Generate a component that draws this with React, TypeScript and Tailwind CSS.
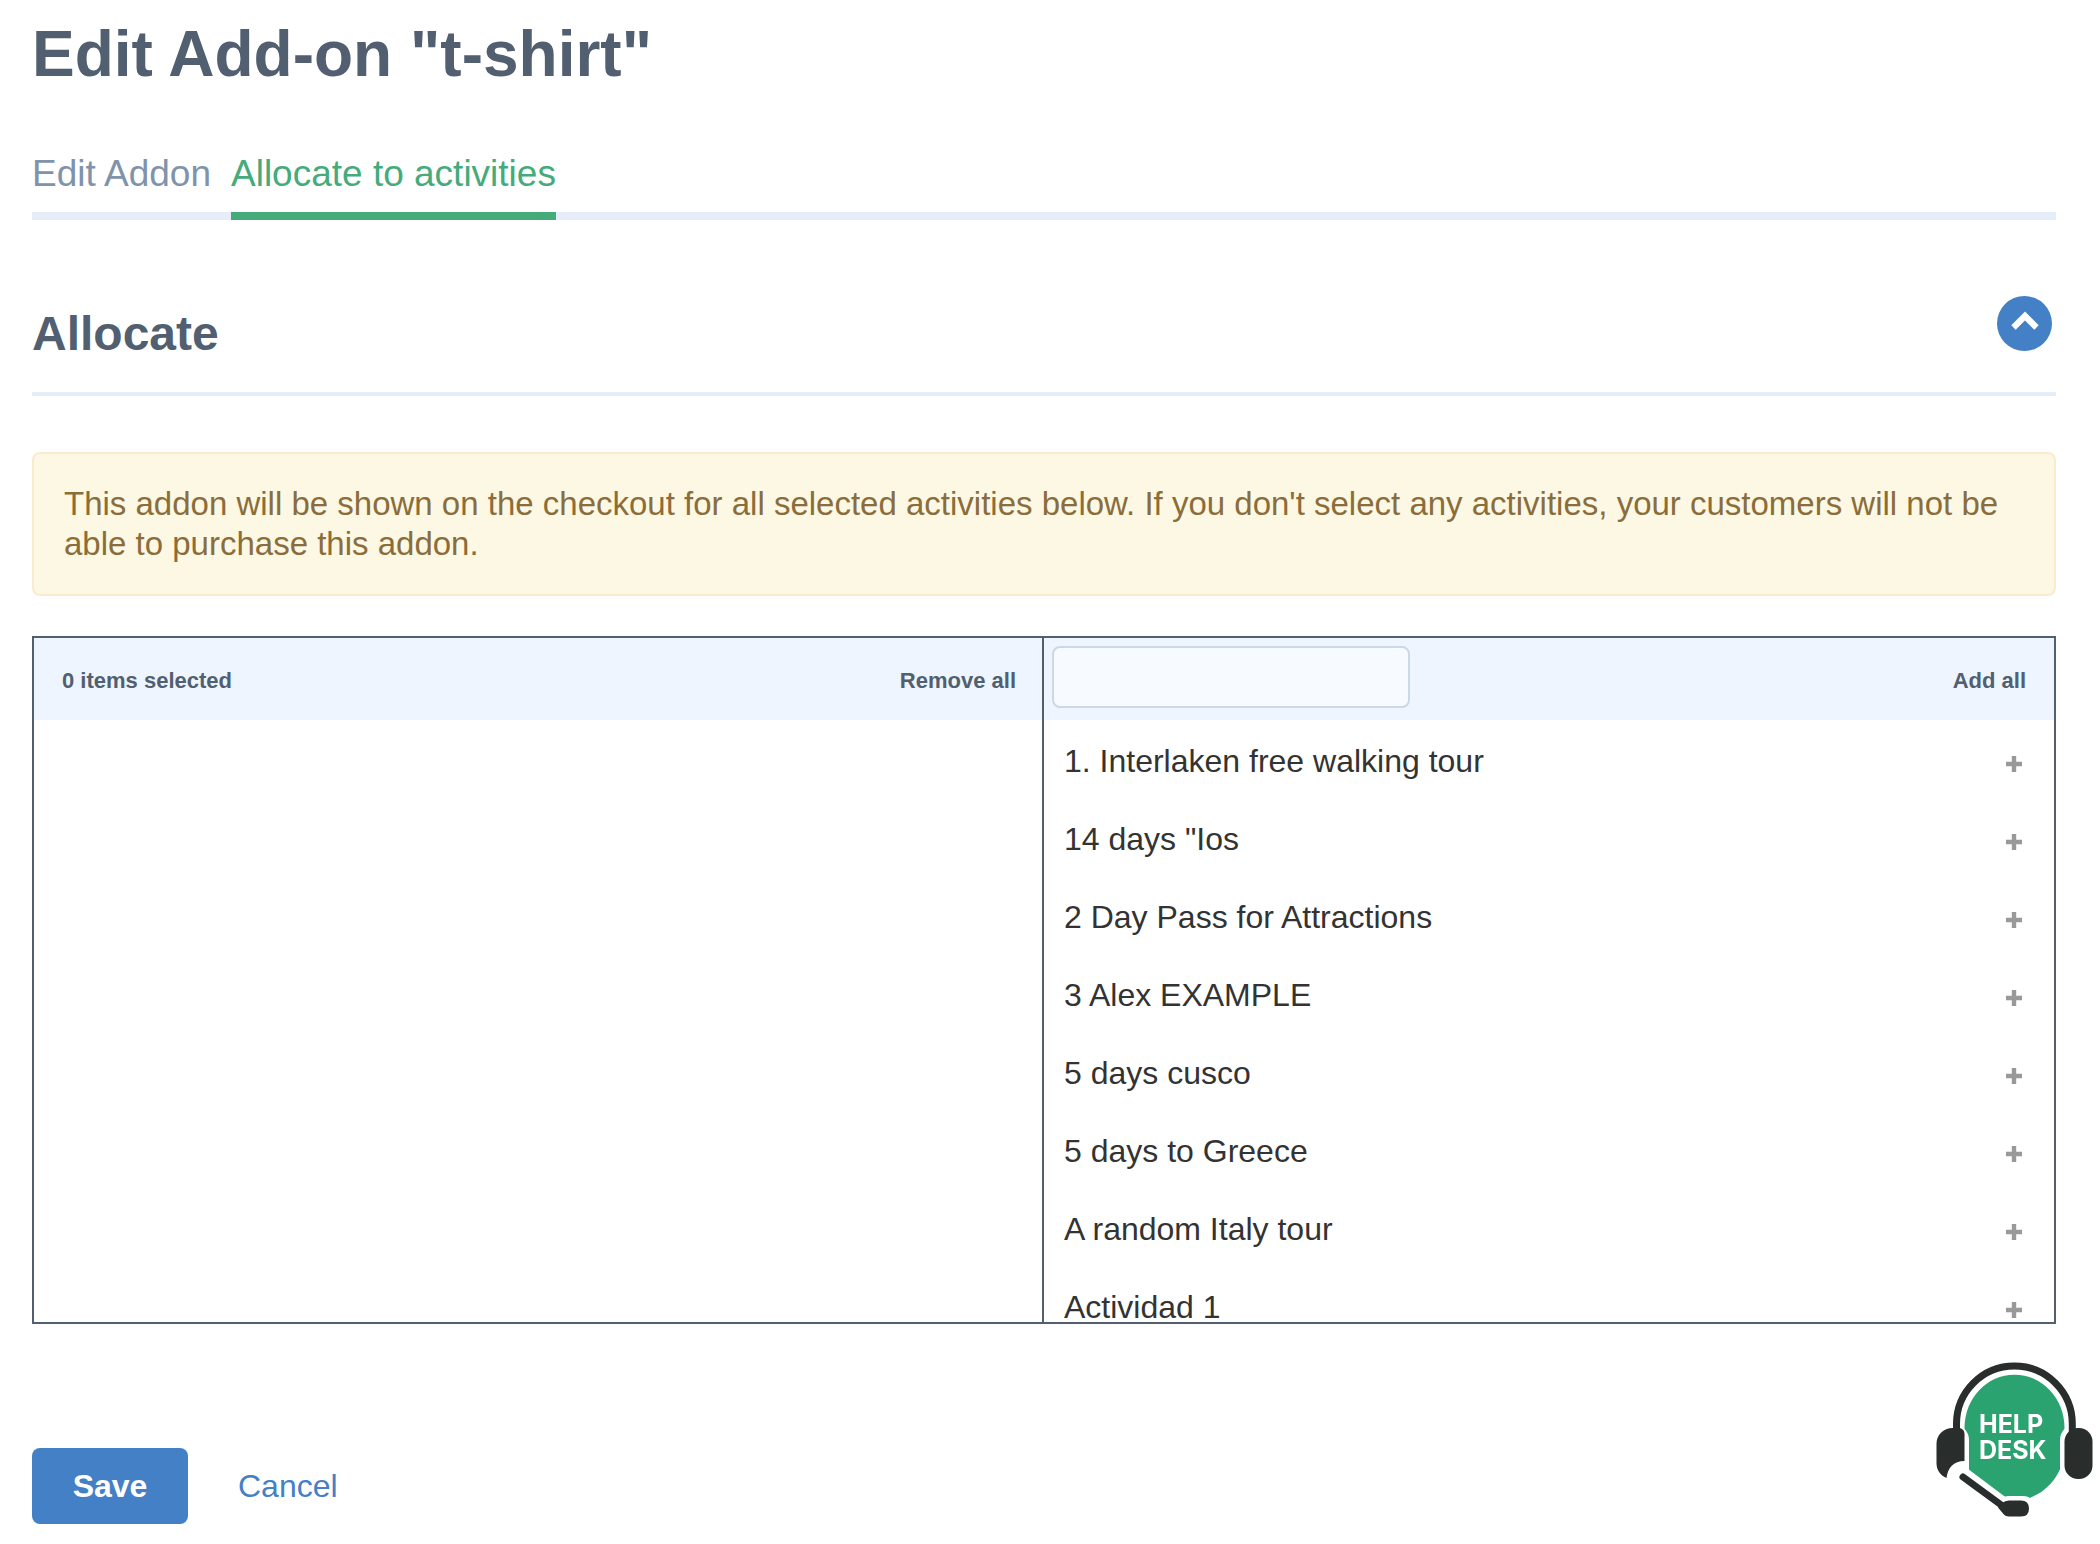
import React, { useState } from "react";

const ACTIVITIES = [
  "1. Interlaken free walking tour",
  '14 days "Ios',
  "2 Day Pass for Attractions",
  "3 Alex EXAMPLE",
  "5 days cusco",
  "5 days to Greece",
  "A random Italy tour",
  "Actividad 1",
];

function PlusIcon() {
  return (
    <svg className="size-4" viewBox="0 0 16 16" aria-hidden="true">
      <path d="M5.8 0h4.4v5.8H16v4.4h-5.8V16H5.8v-5.8H0V5.8h5.8z" fill="#999999" />
    </svg>
  );
}

function HelpDeskIcon() {
  return (
    <svg className="h-[158px] w-[160px]" viewBox="0 -2 160 158" aria-hidden="true">
      <path
        d="M78.500 10.700C106 10.700 128.500 34 128.500 64V84C128.500 108 112 129 90 135H67C45 129 28.500 108 28.500 84V64C28.500 34 51 10.700 78.500 10.700Z"
        fill="#2ba370"
      />
      <rect x="-4" y="60" width="37" height="59" rx="16" fill="#fff" />
      <rect x="124" y="60" width="37" height="59" rx="16" fill="#fff" />
      <path d="M20.500 70V60A57.900 57.900 0 0 1 136.300 60V70" fill="none" stroke="#292d2c" strokeWidth="7" />
      <path
        d="M17 64h7c3 1 4.500 3 4.500 6v27c-11 0-17 7-18 17C4 111 .5 106 .5 99V80C.5 71 7 64 17 64Z"
        fill="#292d2c"
      />
      <rect x="128.500" y="64" width="28" height="51" rx="13.500" fill="#292d2c" />
      <path d="M27 113L67 143" stroke="#fff" strokeWidth="19" strokeLinecap="round" />
      <rect x="62" y="132" width="36" height="24" rx="10" fill="#fff" />
      <path d="M27 113L68 143" stroke="#292d2c" strokeWidth="7" strokeLinecap="round" />
      <path d="M66 139q3-2.500 7-2.500h12q8 0 8 8t-8 8H73q-4 0-6-3l-5-6z" fill="#292d2c" />
      <text x="43" y="69" fontFamily="Inter, sans-serif" fontWeight="700" fontSize="25" fill="#fff">
        HELP
      </text>
      <text x="43" y="95" fontFamily="Inter, sans-serif" fontWeight="700" fontSize="25" fill="#fff">
        DESK
      </text>
    </svg>
  );
}

export default function App() {
  const [open, setOpen] = useState(true);
  const [query, setQuery] = useState("");

  return (
    <main className="min-h-screen bg-white pl-8 pr-11 pt-4 pb-5 font-['Liberation_Sans',Arial,sans-serif] text-[32px] leading-10 text-[#333333]">
      <h1 className="text-[64px] leading-[76px] font-bold text-[#515f70]">Edit Add-on "t-shirt"</h1>

      <nav className="mt-14 flex gap-5 border-b-8 border-[#e4edf8] text-[37px] leading-[52px]">
        <a href="#edit" className="pb-3 text-[#7f93ab]">
          Edit Addon
        </a>
        <a href="#allocate" aria-current="page" className="-mb-2 border-b-8 border-[#45ab7b] pb-3 text-[#45ab7b]">
          Allocate to activities
        </a>
      </nav>

      <section>
        <div className="mt-[76px] flex items-start justify-between border-b-4 border-[#e4edf8] pb-10 pr-1">
          <h2 className="h-14 pt-4 text-[48px] leading-[44px] font-bold text-[#515f70]">Allocate</h2>
          <button
            type="button"
            aria-label="Toggle section"
            aria-expanded={open}
            onClick={() => setOpen(!open)}
            className="flex size-[55px] items-center justify-center rounded-full bg-[#4480c6]"
          >
            <svg className="size-8" viewBox="0 0 32 32" fill="none" aria-hidden="true">
              <path d="M4.500 19.500L16 8L27.500 19.500" stroke="#fff" strokeWidth="6.200" />
            </svg>
          </button>
        </div>

        {open && (
          <>
            <p className="mt-14 rounded-lg border-2 border-[#faebcc] bg-[#fcf8e3] p-[30px] text-[33px] text-[#8a6d3b]">
              This addon will be shown on the checkout for all selected activities below. If you don't select any
              activities, your customers will not be able to purchase this addon.
            </p>

            <div className="mt-10 grid h-[688px] grid-cols-2 border-2 border-[#515f70]">
              <div className="border-r-2 border-[#515f70]">
                <div className="flex h-[82px] items-center justify-between bg-[#eef5fe] pt-1 pl-7 pr-[26px] text-[22px] font-bold text-[#515f70]">
                  <span>0 items selected</span>
                  <button type="button">Remove all</button>
                </div>
              </div>
              <div className="flex min-h-0 flex-col">
                <div className="flex h-[82px] shrink-0 items-center justify-between bg-[#eef5fe] pt-1 pl-2 pr-7 text-[22px] font-bold text-[#515f70]">
                  <input
                    type="text"
                    aria-label="Search activities"
                    value={query}
                    onChange={(e) => setQuery(e.target.value)}
                    className="mb-2 h-[62px] w-[358px] rounded-lg border-2 border-[#cdd8e6] bg-[#f7faff] px-4 text-[28px] font-normal"
                  />
                  <button type="button">Add all</button>
                </div>
                <ul className="min-h-0 overflow-hidden">
                  {ACTIVITIES.filter((a) => a.toLowerCase().includes(query.toLowerCase())).map((name) => (
                    <li key={name} className="flex h-[78px] items-center justify-between pt-1 pl-5 pr-8">
                      <span>{name}</span>
                      <button type="button" aria-label={"Add " + name} className="mt-1.5">
                        <PlusIcon />
                      </button>
                    </li>
                  ))}
                </ul>
              </div>
            </div>
          </>
        )}
      </section>

      <div className="mt-[124px] flex items-center gap-[50px]">
        <button type="button" className="h-[76px] w-[156px] rounded-lg bg-[#4480c6] font-bold text-white">
          Save
        </button>
        <a href="#cancel" className="text-[#4480c6]">
          Cancel
        </a>
      </div>

      <button type="button" aria-label="Help desk" className="fixed right-1 bottom-6">
        <HelpDeskIcon />
      </button>
    </main>
  );
}
